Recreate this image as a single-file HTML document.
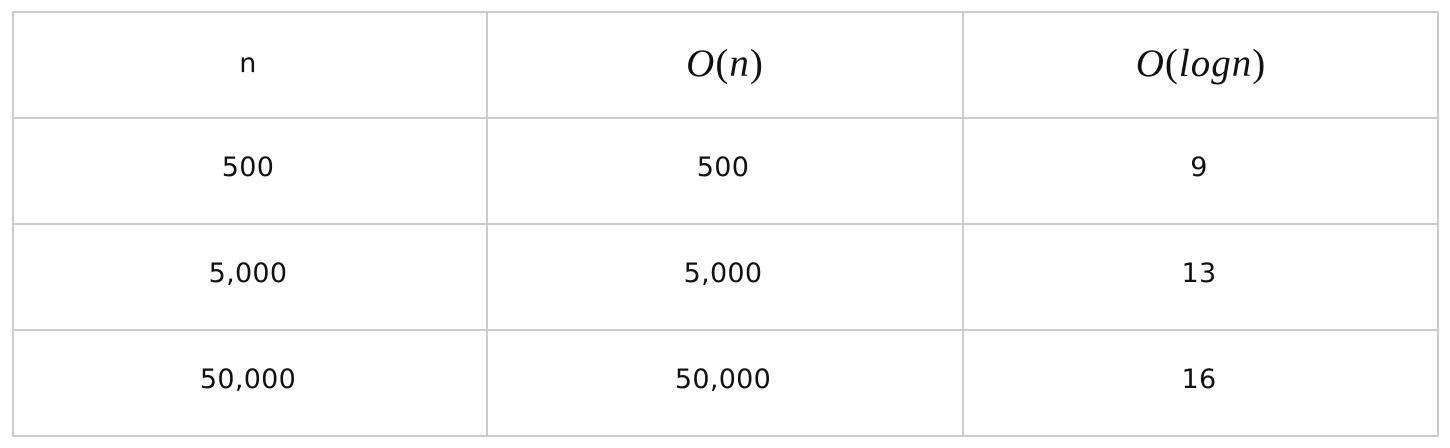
<!DOCTYPE html>
<html><head><style>
body{margin:0;background:#fff;width:1450px;height:448px;position:relative;overflow:hidden;font-family:"DejaVu Sans","Liberation Sans",sans-serif;color:#111}
.h{position:absolute;background:#ccc;height:2px;left:12px;width:1427px}
.v{position:absolute;background:#ccc;width:2px;top:11px;height:426px}
.c{position:absolute;width:474px;height:96px;display:flex;align-items:center;justify-content:center;font-size:27px;letter-spacing:0.3px}
.m{font-family:"Liberation Serif",serif;font-style:italic;font-size:39px;height:104px;letter-spacing:1px}
.m span{font-style:normal}
</style></head><body>
<div class="h" style="top:11px"></div>
<div class="h" style="top:117px"></div>
<div class="h" style="top:223px"></div>
<div class="h" style="top:329px"></div>
<div class="h" style="top:435px"></div>
<div class="v" style="left:12px"></div>
<div class="v" style="left:486px"></div>
<div class="v" style="left:962px"></div>
<div class="v" style="left:1437px"></div>

<div class="c" style="left:11px;top:15px">n</div>
<div class="c m" style="left:488px;top:11px">O<span>(</span>n<span>)</span></div>
<div class="c m" style="left:964px;top:11px">O<span>(</span>logn<span>)</span></div>

<div class="c" style="left:11px;top:119px">500</div>
<div class="c" style="left:486px;top:119px">500</div>
<div class="c" style="left:962px;top:119px">9</div>

<div class="c" style="left:11px;top:225px">5,000</div>
<div class="c" style="left:486px;top:225px">5,000</div>
<div class="c" style="left:962px;top:225px">13</div>

<div class="c" style="left:11px;top:331px">50,000</div>
<div class="c" style="left:486px;top:331px">50,000</div>
<div class="c" style="left:962px;top:331px">16</div>
</body></html>
